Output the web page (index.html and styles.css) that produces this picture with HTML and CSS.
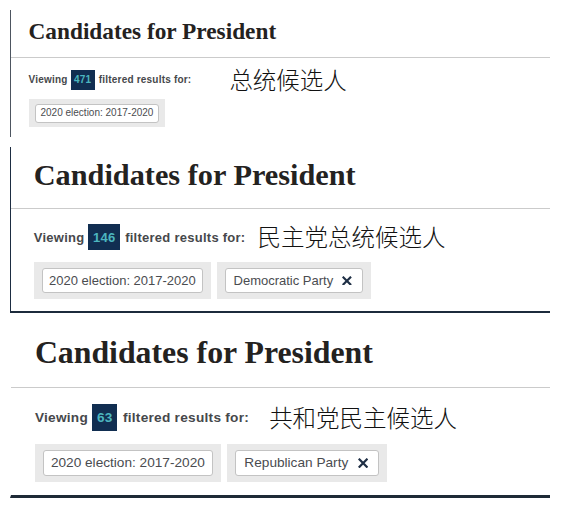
FILE: index.html
```html
<!DOCTYPE html>
<html lang="en">
<head>
<meta charset="utf-8">
<title>Candidates for President</title>
<link rel="stylesheet" href="styles.css">
</head>
<body>
<main class="stack">
  <section class="panel panel--small">
    <header class="panel-head"><h2 class="panel-title">Candidates for President</h2></header>
    <div class="panel-body">
      <div class="results">
        <span>Viewing</span><span class="count">471</span><span>filtered results for:</span>
        <span class="note note--first" lang="zh-CN">总统候选人</span>
      </div>
      <ul class="filters">
        <li class="filter-group"><span class="tag">2020 election: 2017-2020</span></li>
      </ul>
    </div>
  </section>

  <section class="panel panel--medium">
    <header class="panel-head"><h2 class="panel-title">Candidates for President</h2></header>
    <div class="panel-body">
      <div class="results">
        <span>Viewing</span><span class="count">146</span><span>filtered results for:</span>
        <span class="note note--second" lang="zh-CN">民主党总统候选人</span>
      </div>
      <ul class="filters">
        <li class="filter-group"><span class="tag">2020 election: 2017-2020</span></li>
        <li class="filter-group"><span class="tag tag--removable">Democratic Party<svg class="tag-remove" viewBox="0 0 10 10" aria-hidden="true"><path d="M1.5 1.5 8.5 8.5M8.5 1.5 1.5 8.5"/></svg></span></li>
      </ul>
    </div>
  </section>

  <section class="panel panel--large">
    <header class="panel-head"><h2 class="panel-title">Candidates for President</h2></header>
    <div class="panel-body">
      <div class="results">
        <span>Viewing</span><span class="count">63</span><span>filtered results for:</span>
        <span class="note note--third" lang="zh-CN">共和党民主候选人</span>
      </div>
      <ul class="filters">
        <li class="filter-group"><span class="tag">2020 election: 2017-2020</span></li>
        <li class="filter-group"><span class="tag tag--removable">Republican Party<svg class="tag-remove" viewBox="0 0 10 10" aria-hidden="true"><path d="M1.5 1.5 8.5 8.5M8.5 1.5 1.5 8.5"/></svg></span></li>
      </ul>
    </div>
  </section>
</main>
</body>
</html>
```

FILE: styles.css
```css
html, body {
  margin: 0;
  background: #fff;
}

.stack {
  display: flex;
  flex-direction: column;
  gap: 10px;
  width: 540px;
  padding: 10px 0 0 10px;
}

.panel {
  border-left: 1px solid transparent;
  border-bottom: 2px solid #1c2b3c;
}

.panel--small {
  font-size: 10px;
  border-left-color: #4d5560;
  border-bottom: 0;
}

.panel--medium {
  font-size: 13px;
  border-left-color: #1d2d42;
}

.panel--large {
  font-size: 13.65px;
  border-bottom-width: 3px;
  border-bottom-color: #1e2a36;
}

.panel-head {
  padding: 0.8em 1.75em 1.1em;
  border-bottom: 1px solid #cbcbcb;
}

.panel-title {
  margin: 0;
  font: 700 2.33em/1.2 "Liberation Serif", "Times New Roman", serif;
  color: #24221f;
}

.panel-body {
  padding: 1.2em 1.75em 0.92em;
}

.results {
  display: flex;
  align-items: center;
  height: 2em;
  margin-bottom: 0.92em;
  font: 700 1em/1 "Liberation Sans", Arial, sans-serif;
  letter-spacing: 0.02em;
  color: #46484b;
  white-space: nowrap;
}

.count {
  display: flex;
  align-items: center;
  height: 100%;
  padding: 0 0.35em;
  margin: 0 0.4em 0 0.3em;
  background: #112e51;
  color: #4cb6bf;
}

.note {
  font: 300 23.5px/1 "Noto Sans CJK SC", sans-serif;
  letter-spacing: 0;
  color: #111;
}

.note--first { margin-left: 38px; }
.note--second { margin-left: 12px; }
.note--third { margin-left: 20px; }

.filters {
  display: flex;
  gap: 0.45em;
  list-style: none;
  margin: 0;
  padding: 0;
}

.filter-group {
  display: flex;
  padding: 0.45em 0.6em;
  background: #e9e9e9;
}

.tag {
  display: flex;
  align-items: center;
  gap: 0.7em;
  box-sizing: border-box;
  height: 1.92em;
  padding: 0 0.5em;
  background: #fff;
  border: 1px solid #c3c3c3;
  border-radius: 3px;
  font: 400 1em/1 "Liberation Sans", Arial, sans-serif;
  color: #4a4c50;
  white-space: nowrap;
}

.tag--removable {
  padding: 0 0.75em 0 0.6em;
}

.tag-remove {
  width: 0.75em;
  height: 0.75em;
  fill: none;
  stroke: #1f2f45;
  stroke-width: 2.2;
  stroke-linecap: square;
}
```
